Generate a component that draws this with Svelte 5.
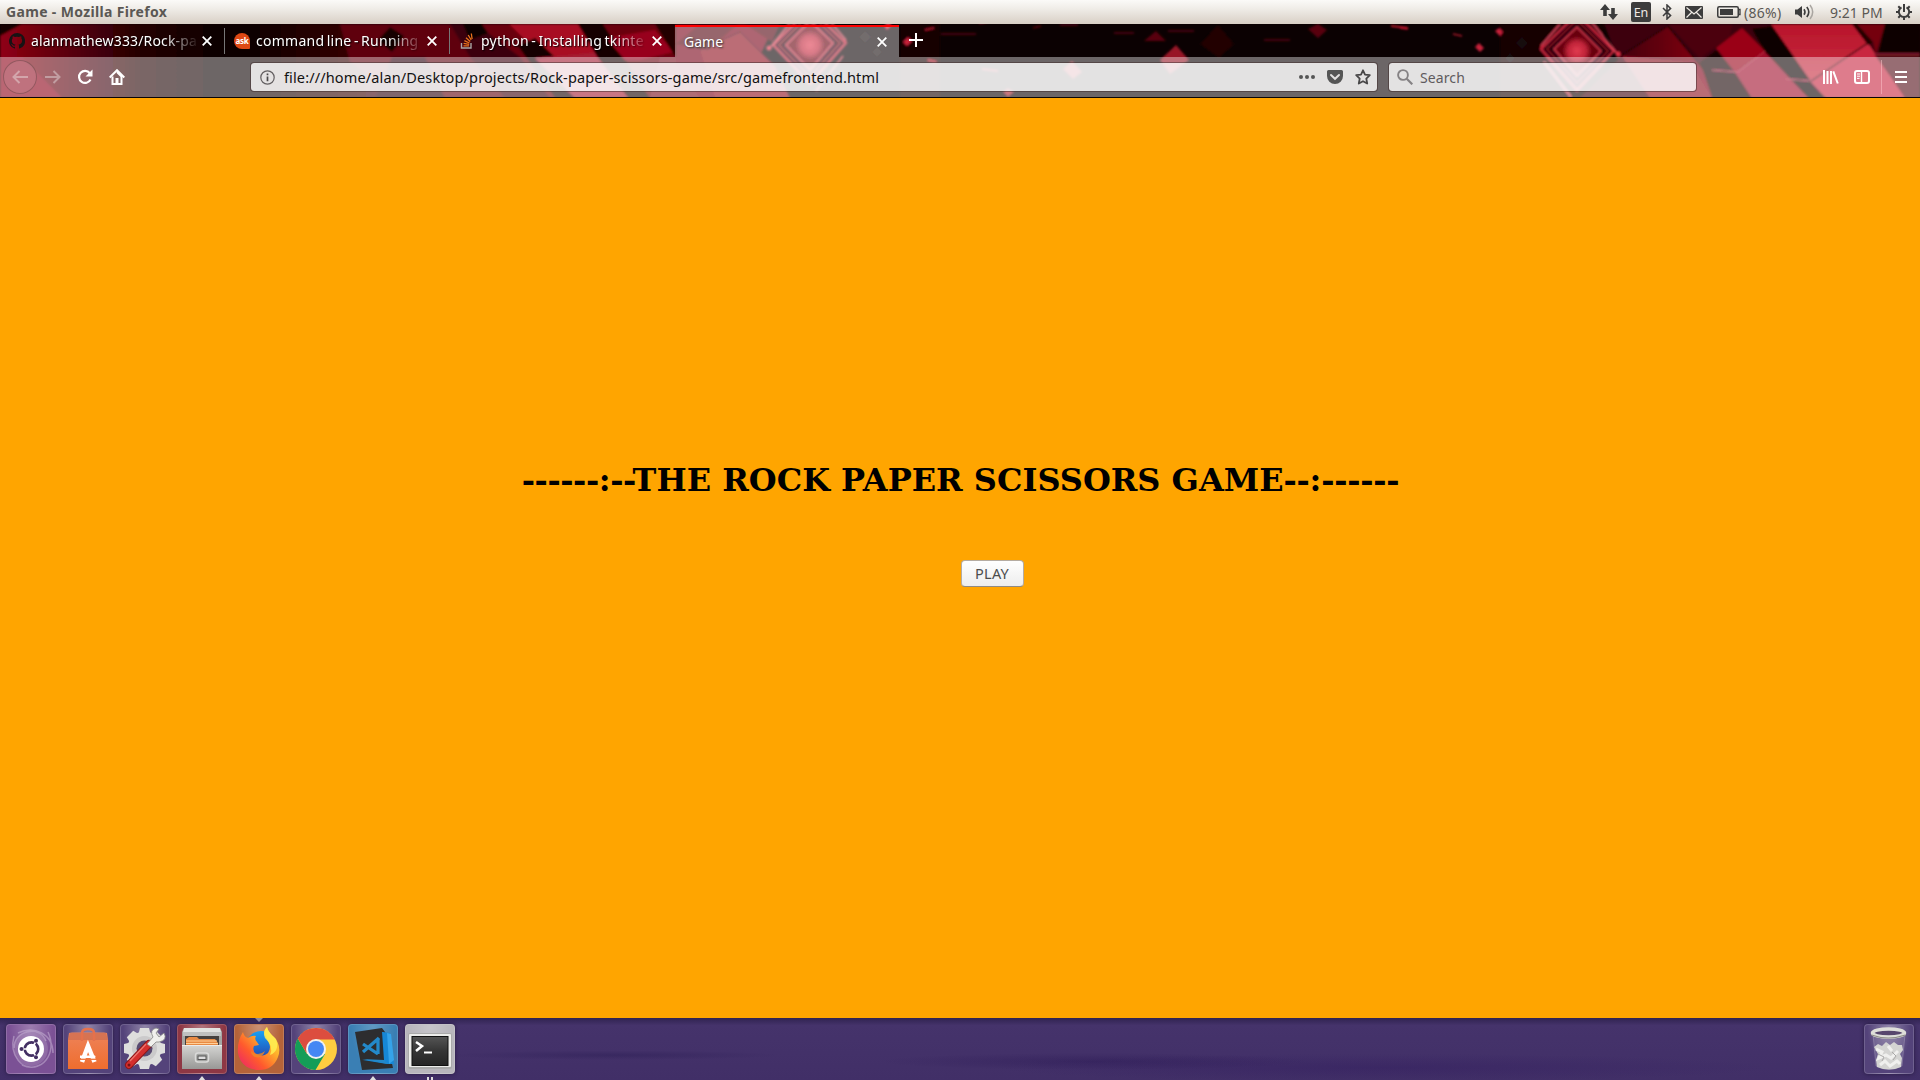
<script>
  const tabs = [
    { title: 'alanmathew333/Rock-pa', icon: 'github', cls: 't1' },
    { title: 'command line - Running', icon: 'ask', cls: 't2' },
    { title: 'python - Installing tkinte', icon: 'stack', cls: 't3' },
    { title: 'Game', icon: null, active: true, cls: 't4' }
  ];
  const apps = [
    { id: 'dash', dots: 0 },
    { id: 'software', dots: 0 },
    { id: 'settings', dots: 0 },
    { id: 'files', dots: 1 },
    { id: 'firefox', dots: 1 },
    { id: 'chrome', dots: 0 },
    { id: 'code', dots: 1 },
    { id: 'terminal', dots: 2 }
  ];
  const teeth = [0, 45, 90, 135, 180, 225, 270, 315];
</script>

<div class="screen">
  <div class="panel">
    <span class="wintitle">Game - Mozilla Firefox</span>
    <div class="tray">
      <svg class="i-net" width="18" height="16" viewBox="0 0 18 16"><path d="M5 0L10 6H6.8V12H3.2V6H0ZM13 16L8 10H11.2V4H14.8V10H18Z" fill="#3c3c3c" /></svg>
      <span class="lang">En</span>
      <svg class="i-bt" width="10" height="16" viewBox="0 0 10 16"><path d="M1 4L8.6 11.6L5 15V1L8.6 4.4L1 12" fill="none" stroke="#3c3c3c" stroke-width="1.5" /></svg>
      <svg class="i-mail" width="18" height="13" viewBox="0 0 18 13"><rect width="18" height="13" rx="1" fill="#3c3c3c" /><path d="M1.5 1.5L9 8L16.5 1.5M1.5 11.5L6.5 6.5M16.5 11.5L11.500 6.500" fill="none" stroke="#eeeae4" stroke-width="1.2" /></svg>
      <svg class="i-bat" width="24" height="12" viewBox="0 0 24 12"><rect x=".75" y=".75" width="20.500" height="10.500" rx="1.500" fill="none" stroke="#3c3c3c" stroke-width="1.500" /><rect x="3" y="3" width="13" height="6" fill="#3c3c3c" /><path d="M21 3.500h2v5h-2" fill="none" stroke="#3c3c3c" stroke-width="1.300" /></svg>
      <span class="pct">(86%)</span>
      <svg class="i-vol" width="20" height="16" viewBox="0 0 20 16"><path d="M0 5.500h2.500L7 2v12L2.500 10.500H0Z" fill="#3c3c3c" /><path d="M9 5.200q2 2.800 0 5.600M11.800 3q4 5 0 10" fill="none" stroke="#3c3c3c" stroke-width="1.600" /><path d="M15 1q5.400 7 0 14" fill="none" stroke="#aaa6a1" stroke-width="1.500" /></svg>
      <span class="clock">9:21 PM</span>
      <svg class="i-gear" width="16" height="16" viewBox="0 0 16 16">
        <path d="M5.500 3.300A5.200 5.200 0 1 0 10.500 3.300" fill="none" stroke="#3c3c3c" stroke-width="2" />
        <path d="M8 0V8M0 8H3M13 8H16M2.300 2.300L4.200 4.200M13.700 2.300L11.800 4.200M2.300 13.700L4.200 11.800M13.700 13.700L11.800 11.800M8 13V16" stroke="#3c3c3c" stroke-width="2" />
      </svg>
    </div>
  </div>

  <header class="browser">
    <svg class="theme" width="1920" height="74" viewBox="0 24 1920 74">
      <defs>
        <linearGradient id="edge"><stop offset="0" stop-color="#45000b" /><stop offset="1" stop-color="#8d0014" /></linearGradient>
        <linearGradient id="bright" x1="0" y1="0" x2="0" y2="1"><stop offset="0" stop-color="#b8152b" /><stop offset="1" stop-color="#c92d40" /></linearGradient>
        <linearGradient id="fadeL"><stop offset="0" stop-color="#900014" /><stop offset=".1" stop-color="#6a000d" /><stop offset=".3" stop-color="#240004" /><stop offset=".5" stop-color="#080001" /><stop offset=".75" stop-color="#350006" /><stop offset="1" stop-color="#5c000c" /></linearGradient>
        <radialGradient id="core"><stop offset="0" stop-color="#e23b50" /><stop offset=".6" stop-color="#bf2338" /><stop offset="1" stop-color="#68000f" /></radialGradient>
        <filter id="soft" x="-10%" y="-20%" width="120%" height="140%"><feGaussianBlur stdDeviation=".9" /></filter>
        <g id="diamond">
          <path d="M1577 14L1614 51L1577 90L1541 49Z" fill="#270007" stroke="#c8283d" stroke-width="2.200" />
          <path d="M1577 20L1608 51L1577 83L1547 49Z" fill="none" stroke="#8e1024" stroke-width="1.500" />
          <path d="M1577 27L1601 51L1577 76L1554 49Z" fill="#680010" stroke="#d8384e" stroke-width="1.500" />
          <circle cx="1577" cy="51" r="15" fill="url(#core)" />
          <path d="M1590 20L1618 55M1544 62L1571 97M1541 46L1560 24" stroke="#e8485e" stroke-width="1.500" />
          <circle cx="1618" cy="54" r="2.500" fill="#df3047" /><circle cx="1542" cy="47" r="1.600" fill="#cf2038" />
          <path d="M1475 47l4-4 5 5-4 4ZM1495 31l4-3 4 4-3 4Z" fill="#c8203a" />
          <path d="M1515 43l7-6 6 6-6 6ZM1505 58l5-5 5 5-5 5Z" fill="#12070a" />
          <path d="M1453 34l9 2M1400 28l8 1" stroke="#a9142a" stroke-width="1.500" />
        </g>
        <g id="facets">
          <path d="M1604 24H1920V98H1580L1618 60Z" fill="#3c0009" />
          <path d="M1622 54L1668 26L1700 65L1715 98H1650Z" fill="url(#edge)" />
          <path d="M1668 24H1732L1730 37L1700 58L1670 26Z" fill="#4c0009" />
          <path d="M1622 56L1650 98H1712L1690 62Z" fill="#8a0c1f" />
          <path d="M1622 55L1668 26L1712 80" fill="none" stroke="#160004" stroke-width="1.300" />
          <path d="M1700 62L1722 46L1738 72L1765 98H1712Z" fill="#170005" />
          <path d="M1716 48L1742 28L1765 51L1735 72Z" fill="#9a0119" />
          <path d="M1735 72L1765 51L1812 98H1752Z" fill="#a0112a" />
          <path d="M1752 29L1772 26L1812 80L1830 98H1808L1765 52Z" fill="#0b0003" />
          <path d="M1771 24H1853L1868 43L1811 81Z" fill="url(#bright)" />
          <path d="M1811 82L1868 43L1905 98H1826Z" fill="#c9283f" />
          <path d="M1811 81L1868 43" stroke="#37000a" stroke-width="1.300" />
          <path d="M1852 24H1857L1874 42L1868 45Z" fill="#200005" />
          <path d="M1857 24H1885L1876 54L1873 42Z" fill="#75000f" />
          <path d="M1885 24H1920V54L1878 55Z" fill="#100002" />
          <path d="M1874 54H1920V98H1906Z" fill="#530713" />
          <path d="M1874 54H1920M1712 70L1738 72L1765 51M1786 79L1812 81" fill="none" stroke="#c0304a" stroke-width="1" />
        </g>
      </defs>
      <rect y="24" width="1920" height="74" fill="#0b0102" />
      <g filter="url(#soft)">
        <rect x="900" y="24" width="40" height="74" fill="#150004" />
        <rect x="1500" y="24" width="104" height="74" fill="#180005" />
        <use href="#facets" />
        <use href="#diamond" />
        <rect y="24" width="470" height="74" fill="url(#fadeL)" />
        <path d="M0 24H22L0 36Z" fill="#120003" />
        <path d="M0 57H22L62 98H0Z" fill="#8c0418" />
        <path d="M340 24H450L500 60L540 98H400L350 62Z" fill="#5f000c" />
        <path d="M378 40L390 27L404 36L392 52Z" fill="#180005" />
        <path d="M375 98L392 57L425 57L445 98Z" fill="#2c0008" />
        <path d="M470 24H700V98H545L500 57Z" fill="#6a000e" />
        <path d="M450 24H476L520 57L550 98H505L470 57Z" fill="#3a0009" />
        <path d="M463 24H482L488 33L470 40Z" fill="#0e0003" />
        <path d="M509 24H578L612 70L560 74Z" fill="#a80b20" />
        <path d="M518 46L535 38L560 62L590 98H555Z" fill="#140004" />
        <path d="M535 58L600 52L635 98H575Z" fill="#a41a30" />
        <path d="M578 24H603L650 98H628L598 58Z" fill="#180004" />
        <path d="M606 38L655 30L674 52L640 60H625Z" fill="#98021a" />
        <path d="M655 24H700V58H676Z" fill="#200005" />
        <path d="M660 57H700L735 98H650Z" fill="#790c1c" />
        <path d="M676 24H775L740 98H700L676 65Z" fill="#780012" />
        <path d="M700 50L740 32L775 66L790 98H715Z" fill="#8e081c" />
        <path d="M745 24L780 24L772 42ZM676 44L700 24H738L708 50Z" fill="#53000b" />
        <path d="M700 50L740 32L775 66" fill="none" stroke="#300008" />
        <use href="#diamond" transform="matrix(-1 0 0 1 2387 -6)" />
        <path d="M1160 60L1176 45L1189 60L1170 74Z" fill="#981425" />
        <path d="M1144 41L1156 31L1166 41ZM1308 29L1318 24L1327 30L1318 38Z" fill="#59000d" />
        <path d="M1200 44L1218 25L1234 44L1219 58Z" fill="#220005" />
        <path d="M1063 69L1072 61L1082 72L1073 79ZM1003 92l5-4 6 4-6 5Z" fill="#a31a2b" />
        <path d="M941 34h35M1060 25h18M1114 33h20M1168 31h26M1264 40h26M1033 28l8-2" stroke="#5c000e" stroke-width="1.300" />
        <path d="M1391 26L1408 28M928 60l8 2M982 69l16 2" stroke="#e2162f" stroke-width="1.500" />
      </g>
    </svg>

    <div class="tabbar">
      {#each tabs as tab}
        <div class="tab {tab.cls}" class:active={tab.active}>
          {#if tab.icon === 'github'}
            <svg class="fav" width="16" height="16" viewBox="0 0 16 16"><path fill="#161314" d="M8 0a8 8 0 0 0-2.500 15.600c.4.100.5-.2.500-.4v-1.500c-2.200.5-2.700-1-2.700-1-.4-.9-.9-1.200-.9-1.200-.7-.5.100-.5.100-.5.800.100 1.200.8 1.200.8.700 1.200 1.900.9 2.300.7.100-.5.300-.9.500-1.100C4.700 11.200 2.900 10.500 2.900 7.400c0-.9.300-1.600.8-2.100-.1-.2-.4-1 .1-2.100 0 0 .7-.2 2.200.8a7.500 7.500 0 0 1 4 0c1.500-1 2.200-.8 2.200-.8.400 1.100.200 1.900.100 2.100.5.600.8 1.300.8 2.100 0 3.100-1.900 3.800-3.700 4 .3.300.6.700.6 1.500v2.300c0 .2.100.5.600.4A8 8 0 0 0 8 0Z" /></svg>
          {:else if tab.icon === 'ask'}
            <span class="fav ask">ask</span>
          {:else if tab.icon === 'stack'}
            <svg class="fav" width="16" height="16" viewBox="0 0 16 16"><path d="M2.500 10v5h9.500v-5" fill="none" stroke="#a9a6a5" stroke-width="1.400" /><path d="M4.500 12.800h5.600M4.600 10.300l5.600 1M5.400 7.600l5 2.400M7 4.700l4.200 3.700M9.200 2l3 5M12.300.5l.8 5.500" stroke="#e9721d" stroke-width="1.300" /></svg>
          {/if}
          <span class="label">{tab.title}</span>
          <svg class="close" width="10" height="10" viewBox="0 0 10 10"><path d="M.7.700L9.300 9.300M9.300.700L.7 9.300" stroke="#fff" stroke-width="1.800" /></svg>
        </div>
      {/each}
      <svg class="plus" width="14" height="14" viewBox="0 0 14 14"><path d="M7 0V14M0 7H14" stroke="#fff" stroke-width="2" /></svg>
    </div>

    <div class="toolbar">
      <div class="nav">
        <span class="back"><svg width="16" height="14" viewBox="0 0 16 14"><path d="M16 7H1.500M7.500 1L1.500 7L7.500 13" fill="none" stroke="#d3a5ab" stroke-width="2" /></svg></span>
        <svg class="fwd" width="16" height="14" viewBox="0 0 16 14"><path d="M0 7H14.500M8.500 1L14.500 7L8.500 13" fill="none" stroke="#c19da1" stroke-width="2" /></svg>
        <svg class="reload" width="16" height="16" viewBox="0 0 16 16"><path d="M12.800 4.200A6 6 0 1 0 13.500 10.500" fill="none" stroke="#fff" stroke-width="2.200" /><path d="M15.500 .5V7.500H8.500Z" fill="#fff" /></svg>
        <svg class="home" width="16" height="16" viewBox="0 0 16 16"><path d="M.7 8.500L8 1.200L15.300 8.500" fill="none" stroke="#fff" stroke-width="2" /><path d="M3.500 7.500V15H12.500V7.500L8 3" fill="none" stroke="#fff" stroke-width="2" /><path d="M6.500 9h3v6h-3Z" fill="#fff" /></svg>
      </div>
      <div class="url">
        <svg width="15" height="15" viewBox="0 0 15 15"><circle cx="7.500" cy="7.500" r="6.700" fill="none" stroke="#625e60" stroke-width="1.200" /><path d="M7.500 6.500V11.300M7.500 3.500V5.200" stroke="#4b484a" stroke-width="1.700" /></svg>
        <span class="address">file:///home/alan/Desktop/projects/Rock-paper-scissors-game/src/gamefrontend.html</span>
        <div class="urlactions">
          <svg width="16" height="16" viewBox="0 0 16 16"><circle cx="2" cy="8" r="2" fill="#555" /><circle cx="8" cy="8" r="2" fill="#555" /><circle cx="14" cy="8" r="2" fill="#555" /></svg>
          <svg width="16" height="16" viewBox="0 0 16 16"><path d="M1.500 1h13A1.500 1.500 0 0 1 16 2.500V7A8 8 0 0 1 0 7V2.500A1.500 1.500 0 0 1 1.500 1Z" fill="#555" /><path d="M4 6L8 9.800L12 6" fill="none" stroke="#e2e0e0" stroke-width="2" stroke-linecap="round" /></svg>
          <svg width="16" height="16" viewBox="0 0 16 16"><path d="M8 1.300L10 5.600L14.800 6.200L11.300 9.600L12.200 14.500L8 12.200L3.800 14.500L4.700 9.600L1.200 6.200L6 5.600Z" fill="none" stroke="#484748" stroke-width="1.800" stroke-linejoin="round" /></svg>
        </div>
      </div>
      <div class="search">
        <svg width="16" height="16" viewBox="0 0 16 16"><circle cx="6" cy="6" r="4.900" fill="none" stroke="#858284" stroke-width="1.900" /><path d="M9.700 9.700L15.300 15.300" stroke="#858284" stroke-width="2.200" /></svg>
        <span>Search</span>
      </div>
      <div class="right">
        <svg class="lib" width="16" height="14" viewBox="0 0 16 14"><path d="M1 0V14M4.500 1V14M8 1V14M10.300 1.300L14.800 13.500" stroke="#fff" stroke-width="2" /></svg>
        <svg class="side" width="16" height="14" viewBox="0 0 16 14"><rect x="1" y="1" width="14" height="12" rx="2" fill="none" stroke="#fff" stroke-width="2" /><path d="M7.500 1V13" stroke="#fff" stroke-width="1.400" /><path d="M3 4h3M3 6.200h3M3 8.400h2.500" stroke="#fff" /></svg>
        <span class="sep"></span>
        <svg class="menu" width="12" height="12" viewBox="0 0 12 12"><path d="M0 1H12M0 6H12M0 11H12" stroke="#fff" stroke-width="2" /></svg>
      </div>
    </div>
  </header>

  <main>
    <h1><span class="lead">------:--</span>THE ROCK PAPER SCISSORS GAME<span>--:------</span></h1>
    <button>PLAY</button>
  </main>

  <footer>
    <svg width="0" height="0" class="defs">
      <defs>
        <linearGradient id="grey" x1="0" y1="0" x2="0" y2="1"><stop offset="0" stop-color="#d6d6d4" /><stop offset="1" stop-color="#989896" /></linearGradient>
        <linearGradient id="bag" x1="0" y1="0" x2="0" y2="1"><stop offset="0" stop-color="#ee8359" /><stop offset="1" stop-color="#ef6d2e" /></linearGradient>
        <linearGradient id="fox" x1="1" y1="0" x2="0" y2="1"><stop offset="0" stop-color="#fff14c" /><stop offset=".35" stop-color="#ffb02b" /><stop offset=".65" stop-color="#ff5a2d" /><stop offset="1" stop-color="#e81c73" /></linearGradient>
        <linearGradient id="globe" x1="0" y1="0" x2="0" y2="1"><stop offset="0" stop-color="#16a0f5" /><stop offset="1" stop-color="#293fa8" /></linearGradient>
        <linearGradient id="term" x1="0" y1="0" x2="0" y2="1"><stop offset="0" stop-color="#555" /><stop offset=".5" stop-color="#353535" /><stop offset="1" stop-color="#252525" /></linearGradient>
      </defs>
    </svg>
    {#each apps as app}
      <div class="tile {app.id}">
        <svg width="50" height="50" viewBox="0 0 50 50">
          {#if app.id === 'dash'}
            <path d="M8 24C8 6 34 1 40 17M16 41C36 50 52 29 42 8M8 12C3 31 16 48 32 42M12 9C28 1 47 10 47 29" fill="none" stroke="#d5c5df" stroke-opacity=".45" stroke-width="1.500" />
            <circle cx="25" cy="25" r="17" fill="#d8c9e2" fill-opacity=".2" />
            <circle cx="25" cy="25" r="13" fill="#fff" />
            <circle cx="25.500" cy="25" r="6.700" fill="none" stroke="#432f63" stroke-width="2.700" />
            <path d="M25.500 25L12 25M25.500 25L32 14M25.500 25L32 36" stroke="#fff" stroke-width="1.600" />
            <circle cx="25.500" cy="25" r="5" fill="#fff" />
            <g fill="#432f63"><circle cx="15.500" cy="25" r="2" /><circle cx="30" cy="16.700" r="2" /><circle cx="30" cy="33.300" r="2" /></g>
          {:else if app.id === 'software'}
            <path d="M6 9L9 8.500H41L44 9L45 16V45H5V16Z" fill="url(#bag)" />
            <path d="M5 16L7 9H43L45 16Z" fill="#c96b51" fill-opacity=".65" />
            <path d="M19 17V9Q19 5 25 5T31 9V17" fill="none" stroke="#e5714c" stroke-width="2.500" />
            <path d="M19 38L25 22L31.500 38" fill="none" stroke="#fff" stroke-width="4.500" /><path d="M17 31.500H32Q33.500 33.500 31 34H17Z" fill="#fff" /><path d="M17 35.300H34" stroke="#ef753d" stroke-width="1.300" />
          {:else if app.id === 'settings'}
            <g fill="#dededd"><circle cx="24.500" cy="24.500" r="17" />
              {#each teeth as angle}<path d="M20 4H29L31 12H18Z" transform="rotate({angle} 24.500 24.500)" />{/each}
            </g>
            <circle cx="24.500" cy="24.500" r="12.500" fill="#cbcacb" /><circle cx="24.500" cy="24.500" r="8" fill="#584a71" />
            <path d="M9 41L29 20" stroke="#8d1618" stroke-width="8" stroke-linecap="round" /><path d="M9 41L29 20" stroke="#d42e2d" stroke-width="6" stroke-linecap="round" /><path d="M10 37L26 20" stroke="#ed7770" stroke-width="1.300" />
            <path d="M27 20L33 13Q29 6 36 4L39 5L36 9L39 13L44 9Q48 16 39 18L36 18L31 23Z" fill="#f0f0ed" stroke="#868686" stroke-width=".8" /><circle cx="9" cy="41" r="1.500" fill="#771315" />
          {:else if app.id === 'files'}
            <path d="M7 4H43L45 8V45H5V8Z" fill="#a5a6a4" /><path d="M7 4H43L44 8H6Z" fill="#e1e2e0" /><path d="M6 8H44V12H6Z" fill="#bfc0bf" />
            <path d="M8 12H42V23H8Z" fill="#46413e" /><path d="M9 15L12 13H20L22 15H38L41 19V22H9Z" fill="#e88a43" /><path d="M9 17H40M9 19.500H41" stroke="#ffd09a" />
            <path d="M5 21H45V45H5Z" fill="url(#grey)" /><path d="M5 21.500H45" stroke="#ececeb" /><rect x="18.500" y="29" width="13" height="9" rx="2.500" fill="#a2a3a1" stroke="#dadad9" stroke-width="1.500" /><rect x="21" y="32" width="8" height="3.500" fill="#ddd" stroke="#555" />
          {:else if app.id === 'firefox'}
            <circle cx="27" cy="22" r="15" fill="url(#globe)" />
            <path d="M9 8Q10 13 14 14Q18 11 22 12Q20 15 23 18L25 21L20 22Q18 27 22 30Q28 34 34 29Q38 23 34 17L31 11Q29 6 33 3Q34 8 40 13Q48 22 44 33Q39 46 25 46Q7 45 4 29Q3 17 9 8Z" fill="url(#fox)" />
            <path d="M33 3Q28 8 31 14Q40 22 36 31Q46 27 42 15Q34 8 33 3Z" fill="#fff052" fill-opacity=".85" /><path d="M17 27Q24 33 31 27Q28 35 21 33Q17 31 17 27Z" fill="#f18727" fill-opacity=".8" />
          {:else if app.id === 'chrome'}
            <circle cx="25" cy="25" r="21" fill="#ffcd40" />
            <path d="M6.800 14.500A21 21 0 0 0 24.500 46L34 30H25L16 30Z" fill="#149d58" />
            <path d="M25 15.500H43.700A21 21 0 0 0 6.800 14.500L15.500 29Z" fill="#dc4d3f" />
            <circle cx="25" cy="25" r="10" fill="#f1f1f1" /><circle cx="25" cy="25" r="8" fill="#4487f4" />
          {:else if app.id === 'code'}
            <path d="M7 8L34 4L37 8L45 44L14 46Z" fill="#2d2d2f" /><path d="M35 8L42 9L46 40L39 40L15 36H36L34 8Z" fill="#1687d6" /><path d="M39 9L43 10L46 36L41 40Z" fill="#35a3ea" />
            <path d="M15 20L30 30M31 14L15 28M30 14V30" fill="none" stroke="#2389ca" stroke-width="3.300" /><path d="M14 35L36 36L40 40Z" fill="#2389ca" />
          {:else}
            <rect x="3" y="9" width="44" height="36" rx="2" fill="#aaa" /><rect x="4" y="10" width="42" height="33" rx="1" fill="#ededeb" /><rect x="7" y="12.500" width="36" height="29" fill="url(#term)" stroke="#111" />
            <path d="M11 18L17 22L11 27" fill="none" stroke="#fff" stroke-width="2.500" /><path d="M19 28.500H27" stroke="#fff" stroke-width="2" />
          {/if}
        </svg>
        {#if app.id === 'firefox'}<span class="downtip"></span>{/if}
        {#if app.dots === 1}<span class="uptip"></span>{:else if app.dots === 2}<span class="pair"></span>{/if}
      </div>
    {/each}
    <div class="tile trash">
      <svg width="50" height="50" viewBox="0 0 50 50">
        <path d="M9 10L12 42Q25 49 38 42L41 10Z" fill="#fff" fill-opacity=".1" stroke="#fff" stroke-opacity=".2" />
        <path d="M10 23L14 20L18 22L22 18L26 21L30 18L34 21L38 21L39 26L36 30L38 34L37 43Q25 48 13 43L12 36L14 30Z" fill="#d4d4d2" />
        <path d="M12 25L18 28L15 34L22 31L27 34L34 27M16 41L21 37L26 42L33 37L36 40M24 22L28 27" fill="none" stroke="#f0f0ee" stroke-width="3" /><path d="M14 30L20 33L18 37M28 28L32 32L29 36" fill="none" stroke="#aaa9a8" />
        <ellipse cx="24.500" cy="9" rx="16" ry="4" fill="#57466d" stroke="#deded9" stroke-width="3.500" /><path d="M7.500 11Q24 17 41.500 11" fill="none" stroke="#8d8c87" stroke-width="1.200" />
      </svg>
    </div>
  </footer>
</div>

<style>
  :global(body) { margin: 0; overflow: hidden; }
  * { box-sizing: border-box; }
  svg { display: block; flex: none; }
  .screen { width: 1920px; height: 1080px; display: flex; flex-direction: column; background: #ffa500; font-family: "Noto Sans", "Open Sans", sans-serif; font-size: 14.5px; white-space: nowrap; overflow: hidden; }
  .panel { height: 24px; flex: none; display: flex; align-items: center; justify-content: space-between; padding: 0 8px 0 6px; background: linear-gradient(#fbfaf8, #f0ede8 35%, #d8cfc5); color: #5b5854; }
  .wintitle { font-weight: 700; font-size: 14px; line-height: 24px; letter-spacing: .34px; }
  .tray { display: flex; align-items: center; height: 24px; font-size: 14px; }
  .lang { margin-left: 13px; width: 20px; height: 20px; border-radius: 2px; background: #3c3c3c; color: #efebe6; font-size: 12.5px; line-height: 21px; text-align: center; }
  .i-bt { margin-left: 11px; }
  .i-mail { margin-left: 13px; }
  .i-bat { margin-left: 14px; }
  .pct { width: 38px; margin-left: 3px; letter-spacing: .3px; }
  .i-vol { margin-left: 13px; }
  .clock { width: 53px; margin-left: 15px; }
  .i-gear { margin-left: 13px; }

  .browser { position: relative; height: 74px; flex: none; border-bottom: 1px solid #0a0505; overflow: hidden; }
  .theme { position: absolute; left: 0; top: 0; }
  .tabbar { position: relative; display: flex; height: 33px; }
  .tab { width: 225px; height: 33px; display: flex; align-items: center; padding: 1px 12px 0 9px; color: #fff; text-shadow: 1px 1px 1.500px #000; border-right: 1px solid transparent; border-image: linear-gradient(transparent 15%, #777 15%, #777 88%, transparent 88%) 1; }
  .tab.t3 { border-image: none; }
  .tab.active { width: 224px; border-image: none; border-right: 0; border-top: 2px solid #f00; padding: 0 12px 1px 9px; background: rgba(255, 255, 255, .4); background-clip: padding-box; margin-top: 1px; height: 32px; text-shadow: 1px 1px 2px #333; }
  .fav { width: 16px; height: 16px; margin-right: 6px; flex: none; }
  .ask { border-radius: 8px 8px 1px 8px; background: #dd4814; color: #fff; font-size: 8px; font-weight: 700; line-height: 15px; text-align: center; text-shadow: none; letter-spacing: -.3px; }
  .label { flex: 1; line-height: 24px; margin-right: 6px; min-width: 0; font-size: 14px; mask-image: linear-gradient(90deg, #000 80%, transparent 102%); }
  .t1 .label { letter-spacing: .15px; }
  .t2 .label { letter-spacing: .26px; word-spacing: -1.500px; }
  .t3 .label { letter-spacing: .26px; word-spacing: -1.500px; }
  .t4 .label { mask-image: none; }
  .plus { margin: 9px 0 0 10px; }

  .toolbar { position: relative; height: 40px; display: flex; align-items: center; background: rgba(255, 255, 255, .4); }
  .nav { width: 250px; display: flex; align-items: center; padding-left: 3px; }
  .back { width: 34px; height: 34px; border: 1px solid rgba(80, 50, 50, .4); border-radius: 50%; background: rgba(255, 255, 255, .08); display: flex; align-items: center; justify-content: center; }
  .fwd { margin-left: 8px; }
  .reload { margin-left: 16px; }
  .home { margin-left: 16px; }
  .url, .search { height: 30px; display: flex; align-items: center; background: rgba(255, 255, 255, .81); background-clip: padding-box; border: 1px solid rgba(60, 40, 40, .5); border-radius: 4px; }
  .url { width: 1128px; padding: 0 6px 0 9px; color: #111; }
  .address { margin-left: 9px; letter-spacing: .13px; }
  .urlactions { margin-left: auto; display: flex; gap: 12px; }
  .search { margin-left: 10px; width: 309px; padding-left: 8px; color: #5f5b5d; }
  .search span { margin-left: 7px; font-size: 14px; letter-spacing: .1px; }
  .right { display: flex; align-items: center; flex: 1; padding-left: 126px; }
  .side { margin-left: 15px; }
  .sep { width: 1px; height: 34px; margin-left: 11px; background: rgba(255, 200, 205, .5); }
  .menu { margin-left: 13px; }

  main { flex: 1; display: flex; flex-direction: column; align-items: center; background: #ffa500; }
  h1 { margin: 363px 0 0 1px; font: 700 32px/38px "DejaVu Serif", serif; color: #000; }
  h1 span { letter-spacing: -.27px; }
  h1 .lead { letter-spacing: -.45px; margin-right: -3.200px; }
  button { margin: 61px 0 0 64px; width: 63px; height: 27px; padding: 0 0 2px; border: 1px solid #b5aca2; border-bottom-color: #8f8a85; border-radius: 4px; background: linear-gradient(#fff, #ededed); color: #4c4c4c; font: 14.5px/22px "Noto Sans", sans-serif; letter-spacing: .2px; }

  footer { position: relative; height: 62px; flex: none; display: flex; gap: 7px; padding: 6px 6px 0; background: radial-gradient(ellipse at 32% 60%, rgba(32, 20, 75, .3), transparent 9%), radial-gradient(ellipse at 57% 70%, rgba(32, 14, 75, .3), transparent 14%), radial-gradient(ellipse at 72% 80%, rgba(42, 20, 90, .3), transparent 20%), linear-gradient(#302351, #45336b 12%, #412f67); }
  .defs { position: absolute; }
  .tile { position: relative; width: 50px; height: 50px; border-radius: 4px; border: 1px solid rgba(255, 255, 255, .16); background: radial-gradient(ellipse at 50% 0, rgba(255, 255, 255, .35), transparent 65%), #54437a; box-shadow: 0 0 4px rgba(20, 10, 40, .6); }
  .tile > svg { margin: -1px; }
  .dash { background: radial-gradient(ellipse at 50% 0, rgba(255, 255, 255, .25), transparent 65%), #7b5195; }
  .files { background: radial-gradient(ellipse at 50% 0, rgba(255, 255, 255, .3), transparent 65%), #8e3744; }
  .firefox { background: radial-gradient(ellipse at 50% 0, rgba(255, 255, 255, .3), transparent 65%), #b56339; }
  .code { background: radial-gradient(ellipse at 50% 0, rgba(255, 255, 255, .2), transparent 65%), #3a7fb4; }
  .terminal { background: radial-gradient(ellipse at 50% 0, rgba(255, 255, 255, .2), transparent 65%), #b8b6bc; }
  .trash { margin-left: auto; }
  .uptip, .downtip { position: absolute; left: 20px; border: 4px solid transparent; }
  .uptip { top: 47px; border-bottom: 5px solid #ddd; }
  .downtip { top: -7px; border-top: 4px solid #8d8699; }
  .pair { position: absolute; left: 21px; top: 52px; width: 6px; height: 4px; border: solid #ddd; border-width: 0 2px; }
</style>
